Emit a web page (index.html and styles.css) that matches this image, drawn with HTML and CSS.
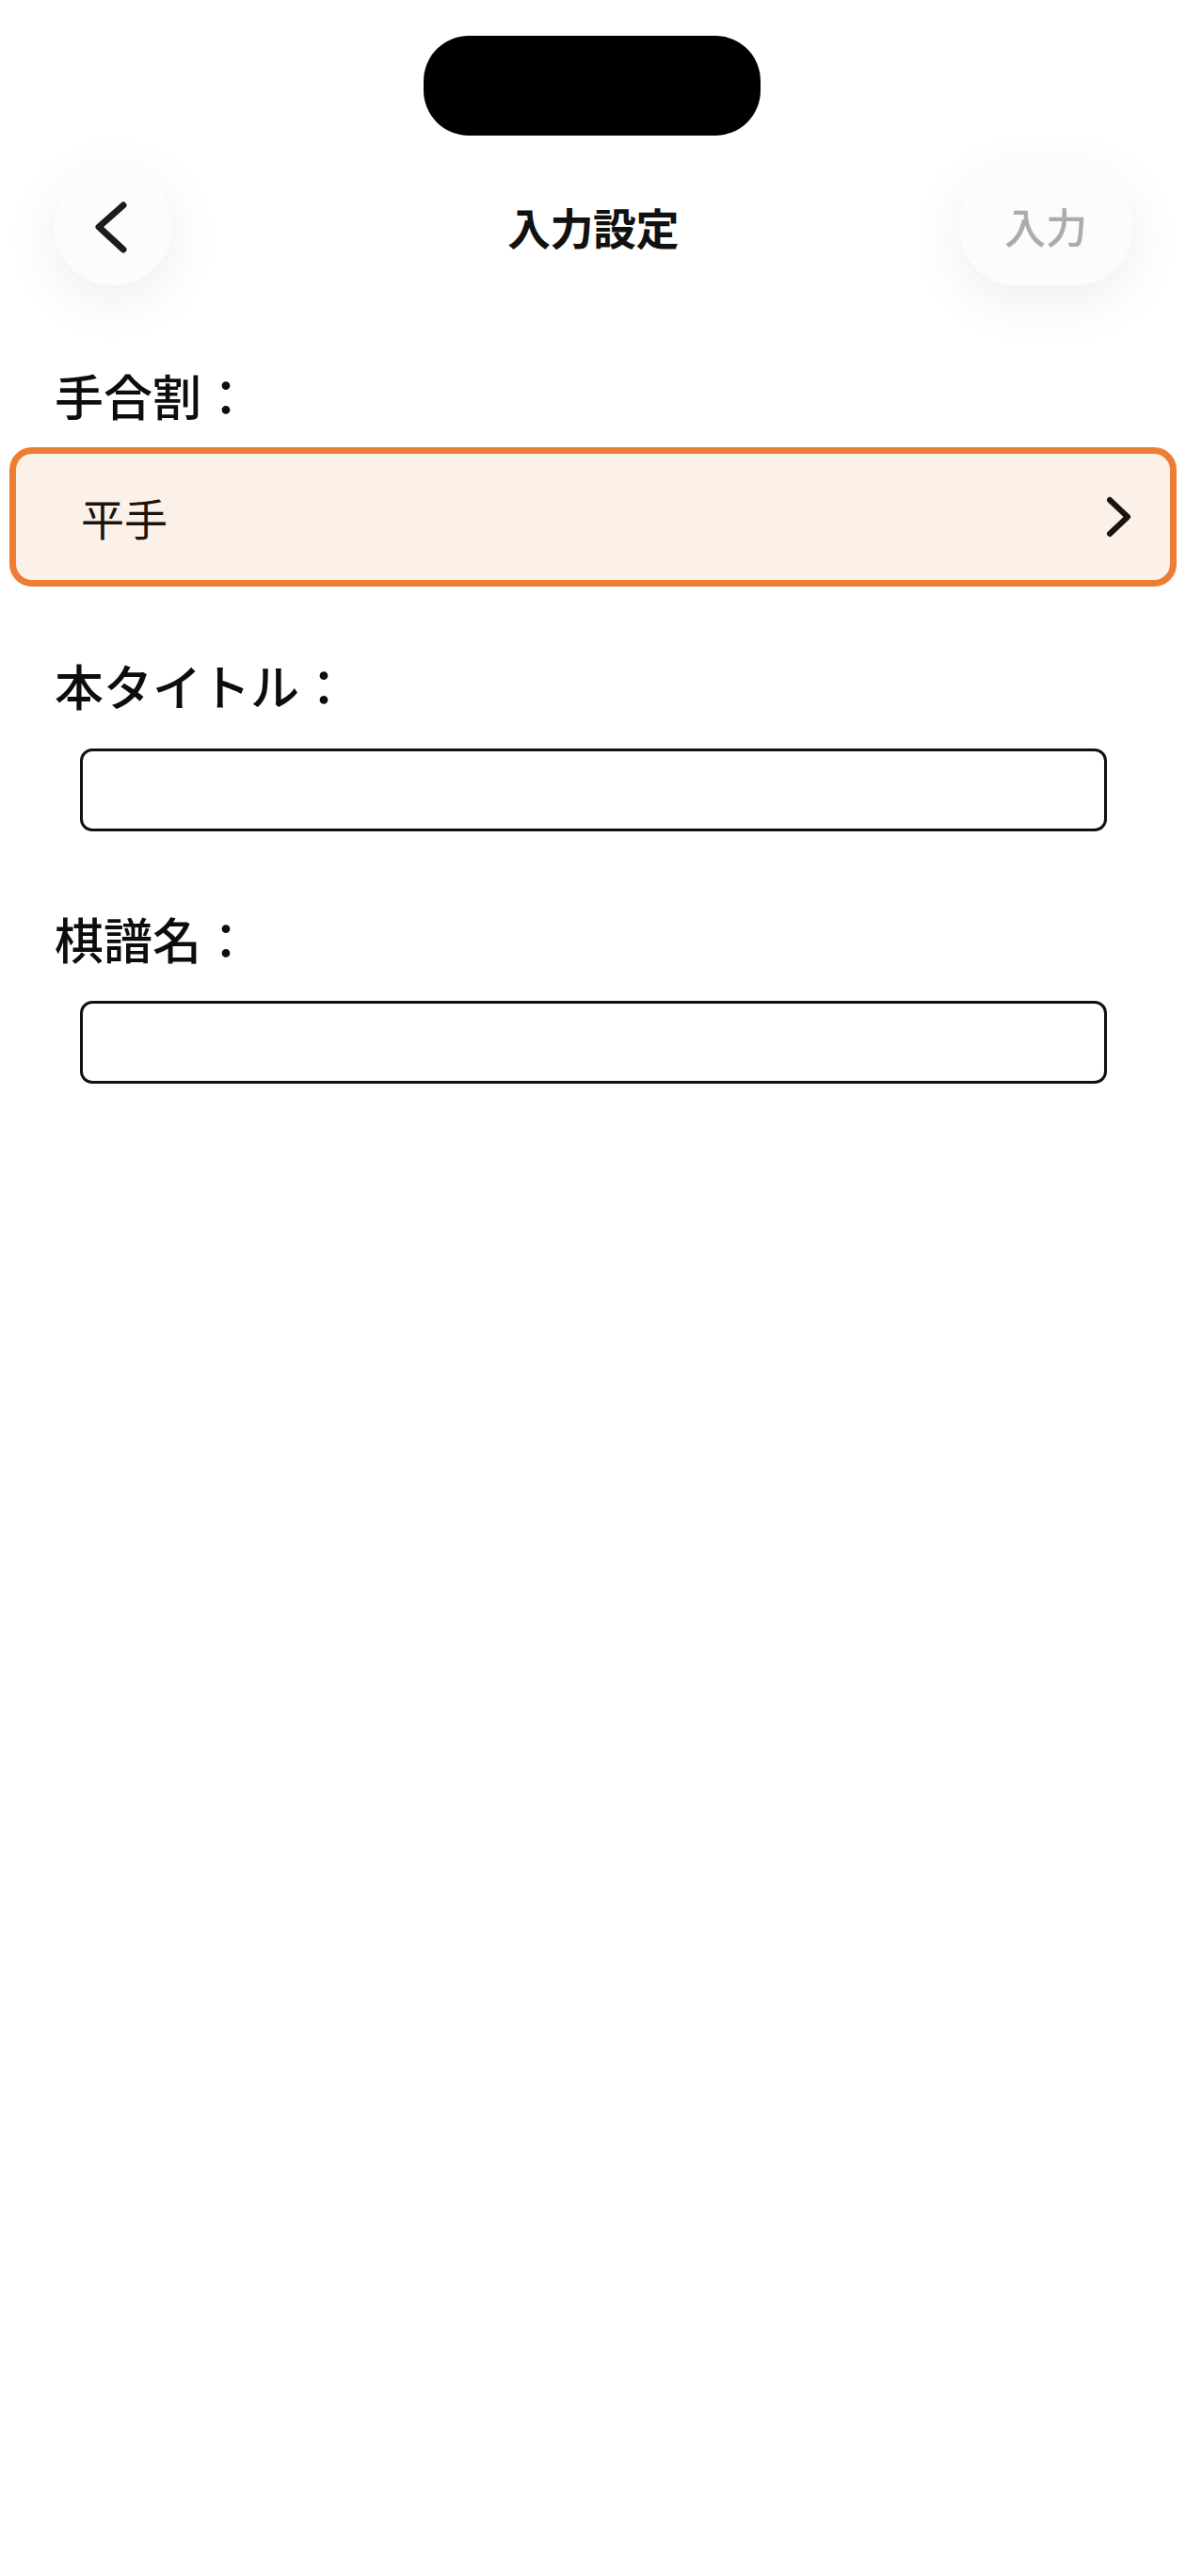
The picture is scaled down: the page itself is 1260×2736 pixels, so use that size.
FILE: index.html
```html
<!DOCTYPE html>
<html lang="ja">
<head>
<meta charset="utf-8">
<title>入力設定</title>
<link rel="stylesheet" href="styles.css">
</head>
<body>
<div class="screen">
  <div class="island-row"><div class="island"></div></div>
  <header class="nav">
    <div class="nav-left">
      <button class="circle-btn" aria-label="戻る">
        <svg width="60" height="70" viewBox="0 0 60 70"><polyline points="43,12 17,35 43,59" fill="none" stroke="#1c1c1c" stroke-width="7" stroke-linecap="round" stroke-linejoin="round"/></svg>
      </button>
    </div>
    <h1 class="nav-title">入力設定</h1>
    <div class="nav-right">
      <button class="pill-btn">入力</button>
    </div>
  </header>
  <main class="form">
    <div class="label label-first">手合割：</div>
    <div class="select-box">
      <span class="select-value">平手</span>
      <svg class="select-chevron" width="34" height="50" viewBox="0 0 34 50"><polyline points="8,7 27,25 8,43" fill="none" stroke="#1a130e" stroke-width="6" stroke-linecap="round" stroke-linejoin="round"/></svg>
    </div>
    <div class="label label-second">本タイトル：</div>
    <div class="text-input"></div>
    <div class="label label-third">棋譜名：</div>
    <div class="text-input"></div>
  </main>
</div>
</body>
</html>
```

FILE: styles.css
```css
html, body {
  margin: 0;
  padding: 0;
  background: #ffffff;
}
body {
  font-family: "Noto Sans CJK JP", "Noto Sans", sans-serif;
  color: #111111;
}
.screen {
  width: 1260px;
  min-height: 2736px;
  background: #ffffff;
}
.island-row {
  display: flex;
  justify-content: center;
  padding-top: 38px;
}
.island {
  width: 358px;
  height: 106px;
  background: #000000;
  border-radius: 48px;
  transform: translateX(-1px);
}
.nav {
  margin-top: 33px;
  height: 126px;
  display: grid;
  grid-template-columns: 1fr auto 1fr;
  align-items: center;
  padding: 0 57px;
}
.nav-left { display: flex; justify-content: flex-start; }
.nav-right { display: flex; justify-content: flex-end; }
.circle-btn {
  width: 126px;
  height: 126px;
  border-radius: 50%;
  border: none;
  background: #fcfcfc;
  box-shadow: 0 14px 60px rgba(0, 0, 0, 0.075);
  display: flex;
  align-items: center;
  justify-content: center;
  padding: 0;
}
.circle-btn svg { display: block; margin-left: -4px; margin-top: 2px; }
.nav-title {
  margin: 0;
  font-size: 46px;
  font-weight: 700;
  line-height: 60px;
  color: #111111;
  letter-spacing: -0.5px;
}
.pill-btn {
  width: 184px;
  height: 126px;
  border-radius: 60px;
  border: none;
  background: #fcfcfc;
  box-shadow: 0 14px 60px rgba(0, 0, 0, 0.075);
  font-family: "Noto Sans CJK JP", "Noto Sans", sans-serif;
  font-size: 44px;
  font-weight: 500;
  color: #ababab;
  padding: 0;
  line-height: 60px;
}
.form {
  display: flex;
  flex-direction: column;
}
.label {
  font-size: 52px;
  font-weight: 500;
  line-height: 60px;
  padding-left: 58px;
  color: #0d0d0d;
}
.label-first { margin-top: 87px; }
.label-second { margin-top: 75px; }
.label-third { margin-top: 84px; }
.select-box {
  margin: 25px 10px 0 10px;
  height: 134px;
  border: 7px solid #ec7d32;
  border-radius: 24px;
  background: #fbf1e8;
  display: flex;
  align-items: center;
  justify-content: space-between;
  padding: 0 38px 0 69px;
}
.select-value {
  font-size: 46px;
  font-weight: 400;
  line-height: 60px;
  color: #1a130e;
}
.select-chevron { display: block; }
.text-input {
  margin: 37px 0 0 85px;
  width: 1085px;
  height: 82px;
  border: 3px solid #111111;
  border-radius: 13px;
  background: #ffffff;
}
.label-third + .text-input { margin-top: 36px; }
```
